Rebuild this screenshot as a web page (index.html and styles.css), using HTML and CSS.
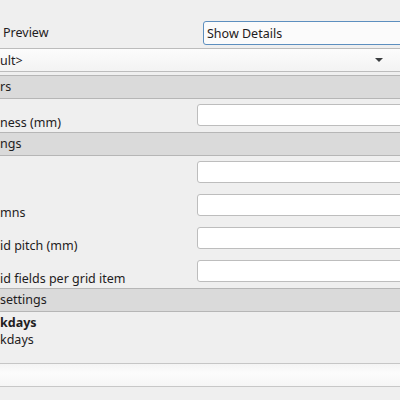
FILE: index.html
```html
<!DOCTYPE html>
<html lang="en">
<head>
    <meta charset="UTF-8">
    <title>Print Preview</title>
    <link rel="stylesheet" href="styles.css">
</head>
<body>
    <div class="panel">
        <div class="top-row">
            <div class="top-label">Preview</div>
            <div class="combo focus">Show Details</div>
        </div>

        <div class="combo wide">
            <span>ult&gt;</span>
            <span class="arrow"></span>
        </div>

        <div class="section-header">rs</div>
        <div class="form-row">
            <label>ness (mm)</label>
            <input type="text">
        </div>

        <div class="section-header">ngs</div>
        <div class="form-row">
            <label></label>
            <input type="text">
        </div>
        <div class="form-row">
            <label>mns</label>
            <input type="text">
        </div>
        <div class="form-row">
            <label>id pitch (mm)</label>
            <input type="text">
        </div>
        <div class="form-row">
            <label>id fields per grid item</label>
            <input type="text">
        </div>

        <div class="section-header">settings</div>
        <div class="list">
            <div class="list-item bold">kdays</div>
            <div class="list-item">kdays</div>
        </div>
        <div class="bar-light"></div>
        <div class="bar-plain"></div>
        <div class="bar-bottom"><span class="dots"></span></div>
    </div>
</body>
</html>
```

FILE: styles.css
```css
body {
    margin: 0;
    padding: 0;
    background-color: #efefef;
    font-family: "Noto Sans", "Open Sans", sans-serif;
    font-size: 12.5px;
    color: #1e2021;
    overflow: hidden;
    width: 400px;
    height: 400px;
}
.panel {
    display: flex;
    flex-direction: column;
    padding-top: 21px;
}
.top-row {
    display: flex;
    height: 24px;
    align-items: center;
}
.top-label {
    width: 203px;
    flex-shrink: 0;
    box-sizing: border-box;
    padding-left: 3px;
    line-height: 24px;
    text-align: left;
}
.combo {
    box-sizing: border-box;
    height: 24px;
    border: 1px solid #bcbcbc;
    border-radius: 3px;
    background: linear-gradient(#fcfcfc, #f3f3f3);
    display: flex;
    align-items: center;
    flex-shrink: 0;
}
.combo.focus {
    width: 210px;
    border-color: #5d8fbf;
    background: #fbfbfb;
    padding-left: 3px;
}
.combo.wide {
    margin-top: 3px;
    margin-left: -4px;
    width: 410px;
    padding-left: 3px;
    justify-content: space-between;
    padding-right: 22px;
}
.arrow {
    width: 0;
    height: 0;
    border-left: 4px solid transparent;
    border-right: 4px solid transparent;
    border-top: 4px solid #3b3e40;
}
.section-header {
    box-sizing: border-box;
    height: 24px;
    margin-top: 3px;
    background-color: #dadada;
    border-top: 1px solid #b6b6b6;
    border-bottom: 1px solid #b6b6b6;
    line-height: 22px;
    white-space: nowrap;
}
.form-row {
    display: flex;
    height: 33px;
}
.form-row label {
    flex: 0 0 197px;
    padding-top: 15px;
    line-height: 18px;
    white-space: nowrap;
}
.form-row input {
    box-sizing: border-box;
    margin: 5px 0 0 0;
    width: 215px;
    height: 22px;
    border: 1px solid #bdbdbd;
    border-radius: 3px;
    background: #fff;
    flex-shrink: 0;
}
.form-row + .section-header {
    margin-top: 0;
}
.list {
    height: 49px;
    padding-top: 2px;
}
.list-item {
    line-height: 17px;
}
.list-item.bold {
    font-weight: bold;
}
.bar-light {
    height: 22px;
    border-top: 1px solid #c6c6c6;
    border-bottom: 1px solid #c8c8c8;
    background: linear-gradient(#f4f4f4, #fcfcfc 40%, #f6f6f6);
}
.bar-plain {
    height: 13px;
    background: #efefef;
    border-bottom: 1px solid #cfcfcf;
}
.bar-bottom {
    height: 10px;
    position: relative;
}
.dots {
    position: absolute;
    left: 0;
    top: 0;
    width: 12px;
    border-top: 2px dotted #c0c0c0;
}
```
